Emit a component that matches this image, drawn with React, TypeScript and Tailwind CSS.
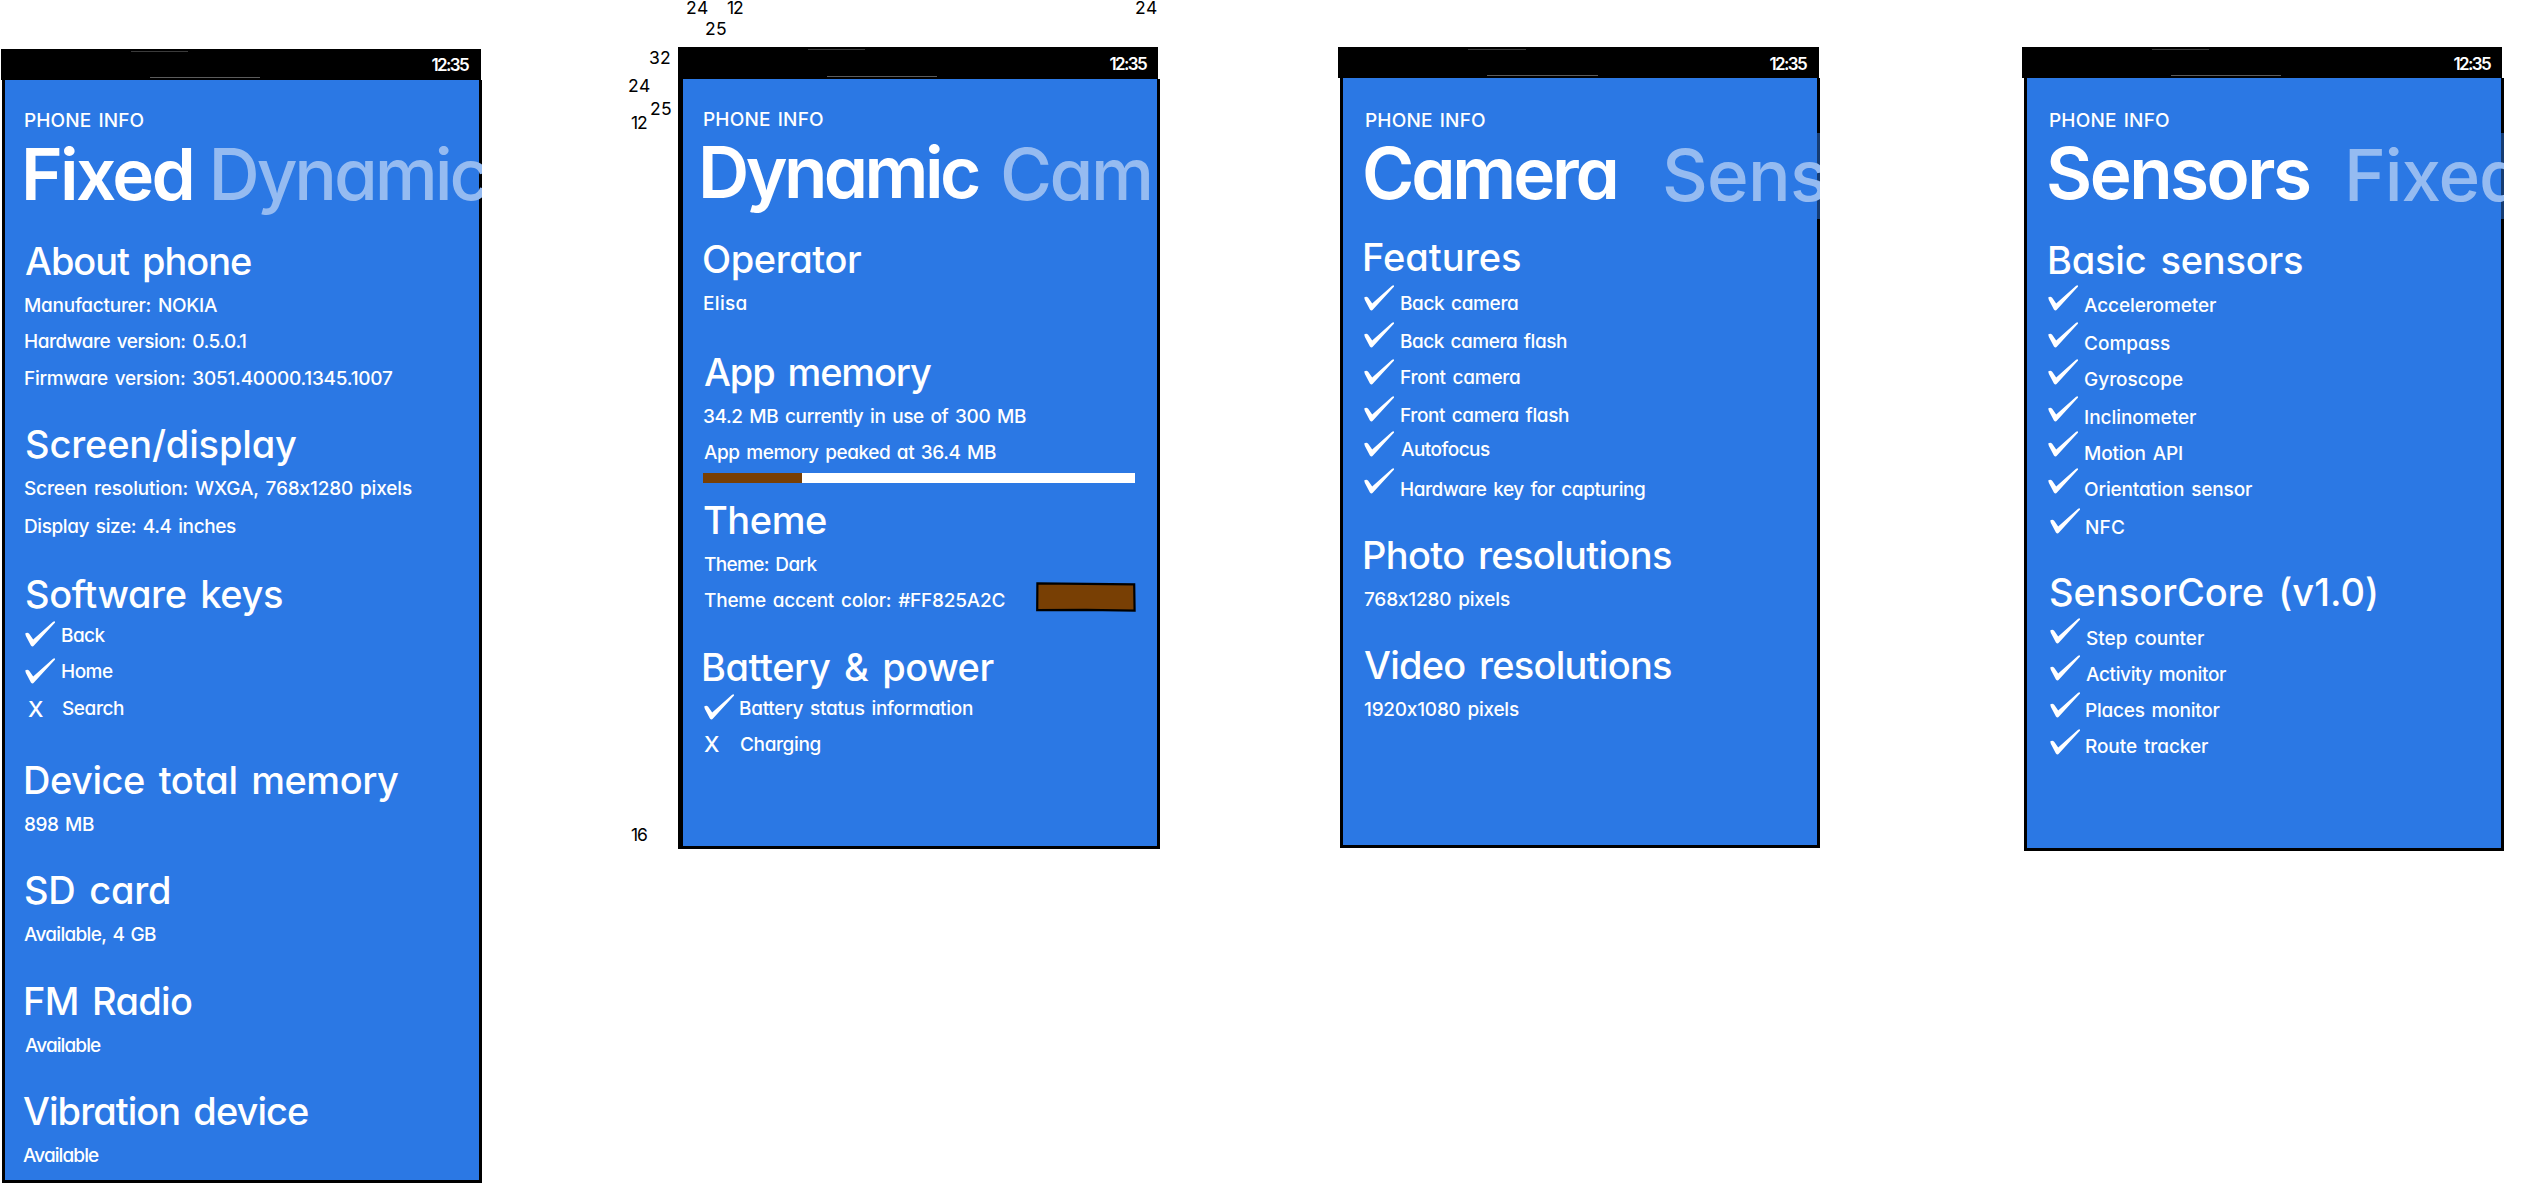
import React, { useLayoutEffect, useRef } from "react";
import clsx from "clsx";

/* One line of text whose ink starts at the box's left edge and spans `w` pixels. */
function Fit({ text, w, className }: { text: string; w: number; className?: string }) {
  const ref = useRef<HTMLSpanElement>(null);
  useLayoutEffect(() => {
    const el = ref.current;
    if (!el) return;
    el.style.letterSpacing = "0px";
    el.style.marginLeft = "0px";
    const cs = getComputedStyle(el);
    const ctx = document.createElement("canvas").getContext("2d");
    if (!ctx) return;
    ctx.font = `${cs.fontWeight} ${cs.fontSize} ${cs.fontFamily}`;
    const m = ctx.measureText(text);
    const left = -m.actualBoundingBoxLeft;
    const right = m.width - m.actualBoundingBoxRight;
    const ink = el.getBoundingClientRect().width - left - right;
    if (text.length > 1) el.style.letterSpacing = `${(w - ink) / (text.length - 1)}px`;
    el.style.marginLeft = `${-left}px`;
  }, [text, w]);
  return (
    <div className={clsx("shrink-0 whitespace-nowrap", className)} style={{ width: w }}>
      <span ref={ref} className="inline-block">
        {text}
      </span>
    </div>
  );
}

const Body = ({ text, w, className }: { text: string; w: number; className?: string }) => (
  <Fit
    text={text}
    w={w}
    className={clsx("h-6 text-[19px] leading-[26px] font-medium [word-spacing:2px]", className)}
  />
);

const Heading = ({ text, w, className }: { text: string; w: number; className?: string }) => (
  <Fit
    text={text}
    w={w}
    className={clsx("h-12 text-[38px] leading-[48px] font-medium [word-spacing:4px]", className)}
  />
);

const Check = ({ className }: { className?: string }) => (
  <svg viewBox="0 0 30 26" className={clsx("block h-[26px] w-[30px] shrink-0", className)} fill="#fff">
    <path d="M0.2 12.4 Q2.6 10.8 4.2 12.8 L8.2 18.6 L27.8 0.9 Q29.6 -0.3 30 0.8 Q30.2 1.5 29.4 2.3 L9 24.6 Q7.4 26.4 5.9 24.4 L0.9 15 Z" />
  </svg>
);

type Mark = { x?: boolean; gap: string };
type Label = { text: string; w: number; gap: string };

function CheckList({ marks, labels, className }: { marks: Mark[]; labels: Label[]; className?: string }) {
  return (
    <div className={clsx("flex", className)}>
      <div className="flex w-[37px] flex-col">
        {marks.map((m, i) =>
          m.x ? (
            <Fit key={i} text="X" w={13} className={clsx("h-[26px] text-[22px] leading-[26px] font-medium", m.gap)} />
          ) : (
            <Check key={i} className={m.gap} />
          )
        )}
      </div>
      <div className="flex flex-col">
        {labels.map((l) => (
          <Body key={l.text} text={l.text} w={l.w} className={l.gap} />
        ))}
      </div>
    </div>
  );
}

function Phone({
  className,
  barClass,
  timeClass,
  bodyClass,
  children,
}: {
  className: string;
  barClass: string;
  timeClass: string;
  bodyClass: string;
  children: React.ReactNode;
}) {
  return (
    <section className={clsx("shrink-0", className)}>
      <header className={clsx("relative flex justify-end bg-black text-white", barClass)}>
        <Fit text="12:35" w={37.5} className={clsx("h-5 text-[17px] leading-[22px] font-semibold", timeClass)} />
        <span className="absolute bottom-0.5 left-[31%] h-px w-[23%] bg-[#5c5c5c]" />
        <span className="absolute top-0.5 left-[27%] h-px w-[12%] bg-[#3a3a3a]" />
      </header>
      <div className={clsx("flow-root border-black bg-[#2B78E4] text-white", bodyClass)}>{children}</div>
    </section>
  );
}

function Titles({
  current,
  cw,
  next,
  nw,
  gap,
  className,
}: {
  current: string;
  cw: number;
  next: string;
  nw: number;
  gap: string;
  className?: string;
}) {
  return (
    <div className={clsx("relative flex h-[86px] overflow-x-clip text-[71px] leading-[80px]", className)}>
      <Fit text={current} w={cw} className="font-[560]" />
      <Fit text={next} w={nw} className={clsx("font-medium text-[#95BBF1]", gap)} />
    </div>
  );
}

const notes: { text: string; w: number; pos: string }[] = [
  { text: "24", w: 21, pos: "left-[687px] top-[-3px]" },
  { text: "12", w: 16, pos: "left-[727px] top-[-3px]" },
  { text: "25", w: 20, pos: "left-[706px] top-[18px]" },
  { text: "24", w: 21, pos: "left-[1136px] top-[-3px]" },
  { text: "32", w: 20, pos: "left-[650px] top-[47px]" },
  { text: "24", w: 21, pos: "left-[629px] top-[75px]" },
  { text: "25", w: 20, pos: "left-[651px] top-[98px]" },
  { text: "12", w: 16, pos: "left-[631px] top-[112px]" },
  { text: "16", w: 16, pos: "left-[631px] top-[824px]" },
];

export default function App() {
  return (
    <main className="relative flex h-[1184px] w-[2534px] items-start overflow-hidden bg-white font-['Inter',sans-serif] [font-feature-settings:'cv11']">
      <Phone
        className="mt-[49px] w-[482px]"
        barClass="ml-px h-[31px] w-[480px]"
        timeClass="mt-[5px] mr-3"
        bodyClass="ml-0.5 h-[1103px] border-x-[3px] border-b-[3px] pl-5"
      >
        <Body text="PHONE INFO" w={118.5} className="mt-7" />
        <Titles current="Fixed" cw={165.5} next="Dynamic" nw={274} gap="ml-[22px]" className="mt-0.5 -mr-[3px] pl-px" />
        <Heading text="About phone" w={226} className="mt-[17px]" />
        <Body text="Manufacturer: NOKIA" w={192} className="mt-2" />
        <Body text="Hardware version: 0.5.0.1" w={221} className="mt-3" />
        <Body text="Firmware version: 3051.40000.1345.1007" w={367} className="mt-[13px]" />
        <Heading text="Screen/display" w={270} className="mt-[30px] ml-px" />
        <Body text="Screen resolution: WXGA, 768x1280 pixels" w={390} className="mt-2 -ml-px" />
        <Body text="Display size: 4.4 inches" w={211} className="mt-3.5" />
        <Heading text="Software keys" w={256} className="mt-8 ml-px" />
        <CheckList
          marks={[{ gap: "mt-[3px]" }, { gap: "mt-[11px]" }, { x: true, gap: "mt-[12px] ml-[3px]" }]}
          labels={[
            { text: "Back", w: 43.5, gap: "mt-[5px]" },
            { text: "Home", w: 51, gap: "mt-3" },
            { text: "Search", w: 62, gap: "mt-[13px]" },
          ]}
        />
        <Heading text="Device total memory" w={372} className="mt-[34px] ml-px" />
        <Body text="898 MB" w={69} className="mt-2" />
        <Heading text="SD card" w={144} className="mt-[30px]" />
        <Body text="Available, 4 GB" w={132} className="mt-2 -ml-px" />
        <Heading text="FM Radio" w={166} className="mt-[31px] ml-px" />
        <Body text="Available" w={76} className="mt-2" />
        <Heading text="Vibration device" w={285} className="mt-[30px] -ml-0.5" />
        <Body text="Available" w={76} className="mt-2 -ml-0.5" />
      </Phone>

      <Phone
        className="mt-[47px] ml-[196px] w-[482px]"
        barClass="h-8 w-[480px]"
        timeClass="mt-[6px] mr-[11px]"
        bodyClass="h-[770px] border-r-[3px] border-b-[3px] border-l-[5px] pl-[21px]"
      >
        <Body text="PHONE INFO" w={119} className="mt-7" />
        <Titles current="Dynamic" cw={276} next="Cam" nw={146} gap="ml-6 mt-0.5" className="mt-px -ml-px" />
        <Heading text="Operator" w={157} className="mt-[17px]" />
        <Body text="Elisa" w={42.5} className="mt-2" />
        <Heading text="App memory" w={227} className="mt-[33px]" />
        <Body text="34.2 MB currently in use of 300 MB" w={322} className="mt-2" />
        <Body text="App memory peaked at 36.4 MB" w={292} className="mt-3" />
        <div className="mt-[9px] -ml-px h-2.5 w-[432px] bg-white">
          <div className="h-full w-[99px] bg-[#783F04]" />
        </div>
        <Heading text="Theme" w={122} className="mt-[13px]" />
        <Body text="Theme: Dark" w={113.5} className="mt-2" />
        <div className="mt-1.5 flex h-[30px] w-[432px] justify-between">
          <Body text="Theme accent color: #FF825A2C" w={300.5} className="mt-1.5" />
          <svg viewBox="0 0 100 30" className="h-[30px] w-[100px]">
            <path d="M1.4 1.4 L98.2 2.4 L98.6 28.6 L50 27.8 L1.2 28.2 Z" fill="#783F04" stroke="#000" strokeWidth="2.2" />
          </svg>
        </div>
        <Heading text="Battery & power" w={289.5} className="mt-[31px]" />
        <CheckList
          marks={[{ gap: "mt-[3px]" }, { x: true, gap: "mt-[11px]" }]}
          labels={[
            { text: "Battery status information", w: 233, gap: "mt-[5px] -ml-px" },
            { text: "Charging", w: 79.5, gap: "mt-3" },
          ]}
        />
      </Phone>

      <Phone
        className="mt-[47px] ml-[178px] w-[482px]"
        barClass="h-[31px] w-[481px]"
        timeClass="mt-[6px] mr-3"
        bodyClass="ml-0.5 h-[770px] border-x-[3px] border-b-[3px] pl-[22px]"
      >
        <Body text="PHONE INFO" w={119} className="mt-[30px] ml-px" />
        <Titles
          current="Camera"
          cw={250}
          next="Sens"
          nw={160}
          gap="ml-[50px] mt-0.5"
          className="mt-px -mr-[3px] bg-[#2B78E4]/50"
        />
        <Heading text="Features" w={155} className="mt-3.5" />
        <CheckList
          className="-ml-px"
          marks={[
            { gap: "mt-1" },
            { gap: "mt-[11px]" },
            { gap: "mt-[11px]" },
            { gap: "mt-[11px]" },
            { gap: "mt-[9px]" },
            { gap: "mt-[11px]" },
          ]}
          labels={[
            { text: "Back camera", w: 117, gap: "mt-2.5" },
            { text: "Back camera flash", w: 166, gap: "mt-3.5" },
            { text: "Front camera", w: 119, gap: "mt-3" },
            { text: "Front camera flash", w: 168, gap: "mt-3.5" },
            { text: "Autofocus", w: 89, gap: "mt-2.5" },
            { text: "Hardware key for capturing", w: 244, gap: "mt-4" },
          ]}
        />
        <Heading text="Photo resolutions" w={306} className="mt-[30px]" />
        <Body text="768x1280 pixels" w={148} className="mt-2 -ml-px" />
        <Heading text="Video resolutions" w={307} className="mt-[30px] -ml-px" />
        <Body text="1920x1080 pixels" w={157} className="mt-2 -ml-px" />
      </Phone>

      <Phone
        className="mt-[47px] ml-[202px] w-[482px]"
        barClass="h-[31px] w-[480px]"
        timeClass="mt-[6px] mr-[11px]"
        bodyClass="ml-0.5 h-[773px] border-x-[3px] border-b-[3px] pl-[22px]"
      >
        <Body text="PHONE INFO" w={119} className="mt-[30px] ml-px" />
        <Titles
          current="Sensors"
          cw={261}
          next="Fixed"
          nw={169}
          gap="ml-[39px] mt-0.5"
          className="mt-px -mr-[3px] bg-[#2B78E4]/50"
        />
        <Heading text="Basic sensors" w={252} className="mt-[17px] ml-px" />
        <CheckList
          className="-ml-px"
          marks={[
            { gap: "mt-px" },
            { gap: "mt-[11px]" },
            { gap: "mt-[11px]" },
            { gap: "mt-[11px]" },
            { gap: "mt-[9px]" },
            { gap: "mt-[11px]" },
            { gap: "mt-3.5 ml-0.5" },
          ]}
          labels={[
            { text: "Accelerometer", w: 132, gap: "mt-[9px] -ml-px" },
            { text: "Compass", w: 85, gap: "mt-3.5" },
            { text: "Gyroscope", w: 98, gap: "mt-3" },
            { text: "Inclinometer", w: 111, gap: "mt-3.5" },
            { text: "Motion API", w: 97, gap: "mt-3" },
            { text: "Orientation sensor", w: 167, gap: "mt-3" },
            { text: "NFC", w: 38, gap: "mt-3.5 ml-px" },
          ]}
        />
        <Heading text="SensorCore (v1.0)" w={326} className="mt-[29px] ml-px" />
        <CheckList
          className="ml-px"
          marks={[{ gap: "mt-0.5" }, { gap: "mt-[11px]" }, { gap: "mt-[11px]" }, { gap: "mt-[11px]" }]}
          labels={[
            { text: "Step counter", w: 118, gap: "mt-2.5 -ml-px" },
            { text: "Activity monitor", w: 140, gap: "mt-3 -ml-px" },
            { text: "Places monitor", w: 133.5, gap: "mt-3 -ml-px" },
            { text: "Route tracker", w: 122, gap: "mt-3 -ml-px" },
          ]}
        />
      </Phone>

      {notes.map((n, i) => (
        <div key={i} className={clsx("absolute text-black", n.pos)}>
          <Fit text={n.text} w={n.w} className="h-[22px] text-[17.5px] leading-[22px]" />
        </div>
      ))}
    </main>
  );
}
